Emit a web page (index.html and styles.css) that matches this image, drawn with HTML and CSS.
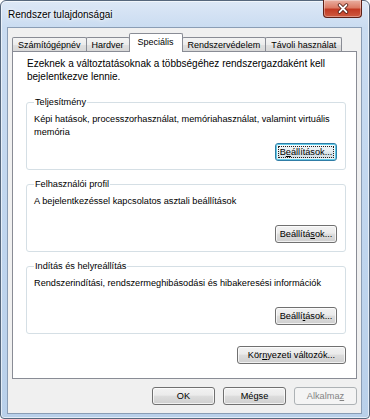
FILE: index.html
```html
<!DOCTYPE html>
<html lang="hu">
<head>
<meta charset="utf-8">
<title>Rendszer tulajdonságai</title>
<link rel="stylesheet" href="styles.css">
</head>
<body>
<div class="window">
  <div class="titlebar">
    <span class="title">Rendszer tulajdonságai</span>
    <button class="close" aria-label="Bezárás">
      <svg width="14" height="11" viewBox="0 0 14 11">
        <path d="M3.5 2 L10.5 9 M10.5 2 L3.5 9" stroke="#4a1710" stroke-width="3.4" stroke-linecap="round"/>
        <path d="M3.5 2 L10.5 9 M10.5 2 L3.5 9" stroke="#fff" stroke-width="1.8" stroke-linecap="round"/>
      </svg>
    </button>
  </div>
  <div class="client">
    <div class="tabs">
      <div class="tab">Számítógépnév</div>
      <div class="tab">Hardver</div>
      <div class="tab active">Speciális</div>
      <div class="tab">Rendszervédelem</div>
      <div class="tab">Távoli használat</div>
    </div>
    <div class="panel">
      <p class="intro">Ezeknek a változtatásoknak a többségéhez rendszergazdaként kell bejelentkezve lennie.</p>
      <fieldset class="group">
        <legend>Teljesítmény</legend>
        <p class="desc">Képi hatások, processzorhasználat, memóriahasználat, valamint virtuális memória</p>
        <div class="actions"><button class="btn focused"><span class="focus-ring">B<u>e</u>állítások...</span></button></div>
      </fieldset>
      <fieldset class="group">
        <legend>Felhasználói profil</legend>
        <p class="desc">A bejelentkezéssel kapcsolatos asztali beállítások</p>
        <div class="actions"><button class="btn">Beállítá<u>s</u>ok...</button></div>
      </fieldset>
      <fieldset class="group">
        <legend>Indítás és helyreállítás</legend>
        <p class="desc">Rendszerindítási, rendszermeghibásodási és hibakeresési információk</p>
        <div class="actions"><button class="btn">Beállí<u>t</u>ások...</button></div>
      </fieldset>
      <div class="env"><button class="btn wide">Kör<u>n</u>yezeti változók...</button></div>
    </div>
    <div class="footer">
      <button class="btn">OK</button>
      <button class="btn">Mégse</button>
      <button class="btn" disabled>Alkalma<u>z</u></button>
    </div>
  </div>
</div>
</body>
</html>
```
FILE: styles.css
```css
* { box-sizing: border-box; }
html, body { margin: 0; padding: 0; }
body {
  width: 370px;
  height: 419px;
  overflow: hidden;
  background: #fff;
  font-family: "Liberation Sans", Arial, sans-serif;
  font-size: 9.2px;
  color: #000;
}
.window {
  width: 370px;
  height: 419px;
  border: 1px solid #56677c;
  border-radius: 6px 6px 4px 4px;
  background: linear-gradient(180deg, #dde8f6 0, #cadcf1 26px, #bfd5ee 60%, #b9d0ea 100%);
  box-shadow: inset 0 0 0 1px rgba(255,255,255,0.6);
  padding: 0 7px 4px 6px;
  display: flex;
  flex-direction: column;
}
.titlebar {
  height: 26px;
  flex: none;
  display: flex;
  justify-content: space-between;
  align-items: flex-start;
}
.title {
  font-size: 10px;
  line-height: 12px;
  padding: 8px 0 0 1px;
  color: #000;
  text-shadow: 0 0 6px #fff, 0 0 3px #fff;
}
.close {
  margin-top: -1px;
  width: 39px;
  height: 18px;
  padding: 0;
  border: 1px solid #5e1f16;
  border-top: none;
  border-radius: 0 0 4px 4px;
  background: linear-gradient(180deg, #eab0a2 0, #dc7c66 45%, #c23a23 55%, #cf5a40 100%);
  box-shadow: inset 0 0 0 1px rgba(255,255,255,0.35);
  display: flex;
  align-items: center;
  justify-content: center;
}
.close svg { display: block; }
.client {
  flex: 1;
  background: #f0f0f0;
  border: 1px solid #8a9db5;
  padding: 5px 4px 8px 4px;
  display: flex;
  flex-direction: column;
}
.tabs {
  display: flex;
  align-items: flex-end;
  height: 19px;
  margin-bottom: -1px;
  position: relative;
  z-index: 1;
  flex: none;
}
.tab {
  height: 14px;
  margin: 0 -1px 1px 0;
  padding: 1px 5px 0;
  border: 1px solid #898c95;
  border-bottom: none;
  border-radius: 2px 2px 0 0;
  background: linear-gradient(180deg, #f4f4f4 0, #ececec 50%, #e0e0e0 51%, #d8d8d8 100%);
  font-size: 9px;
  line-height: 12px;
  white-space: nowrap;
}
.tab.active {
  height: 19px;
  margin-bottom: 0;
  padding: 2px 8px 0;
  background: #fff;
  position: relative;
  z-index: 2;
}
.panel {
  flex: 1;
  background: #fff;
  border: 1px solid #898c95;
  padding: 5px 10px 0 13px;
  display: flex;
  flex-direction: column;
}
.intro {
  margin: 0 0 0 1px;
  font-size: 10px;
  line-height: 13px;
}
.group {
  margin: 13px 0 0;
  padding: 5px 8px 8px 7px;
  border: 1px solid #d5dfe5;
  border-radius: 3px;
  min-width: 0;
}
.group + .group { margin-top: 8px; }
.group legend {
  padding: 0 1px;
  line-height: 12px;
}
.desc {
  margin: 0;
  line-height: 13px;
  min-height: 26px;
}
.actions {
  display: flex;
  justify-content: flex-end;
  margin-top: 4px;
}
.env {
  display: flex;
  justify-content: flex-end;
  margin-top: 12px;
}
.btn {
  width: 62px;
  height: 18px;
  padding: 0;
  border: 1px solid #707070;
  border-radius: 3px;
  background: linear-gradient(180deg, #f2f2f2 0, #ebebeb 45%, #dddddd 50%, #cfcfcf 100%);
  box-shadow: inset 0 0 0 1px rgba(255,255,255,0.7);
  font: inherit;
  line-height: 14px;
  color: #000;
  white-space: nowrap;
}
.btn.wide { width: 109px; }
.btn.focused {
  border-color: #2f7da6;
  box-shadow: inset 0 0 0 1px #62cbe8, inset 0 0 0 2px rgba(255,255,255,0.6);
  background: linear-gradient(180deg, #f1f6f8 0, #e8eff2 45%, #dce6ea 50%, #d0dde3 100%);
}
.focus-ring {
  outline: 1px dotted #222;
  outline-offset: 0;
  padding: 0 1px;
}
.btn:disabled {
  border-color: #adb2b5;
  background: #f4f4f4;
  box-shadow: none;
  color: #838383;
}
.footer {
  flex: none;
  display: flex;
  justify-content: flex-end;
  gap: 8px;
  margin-top: 8px;
}
.footer .btn { width: 63px; }
```
